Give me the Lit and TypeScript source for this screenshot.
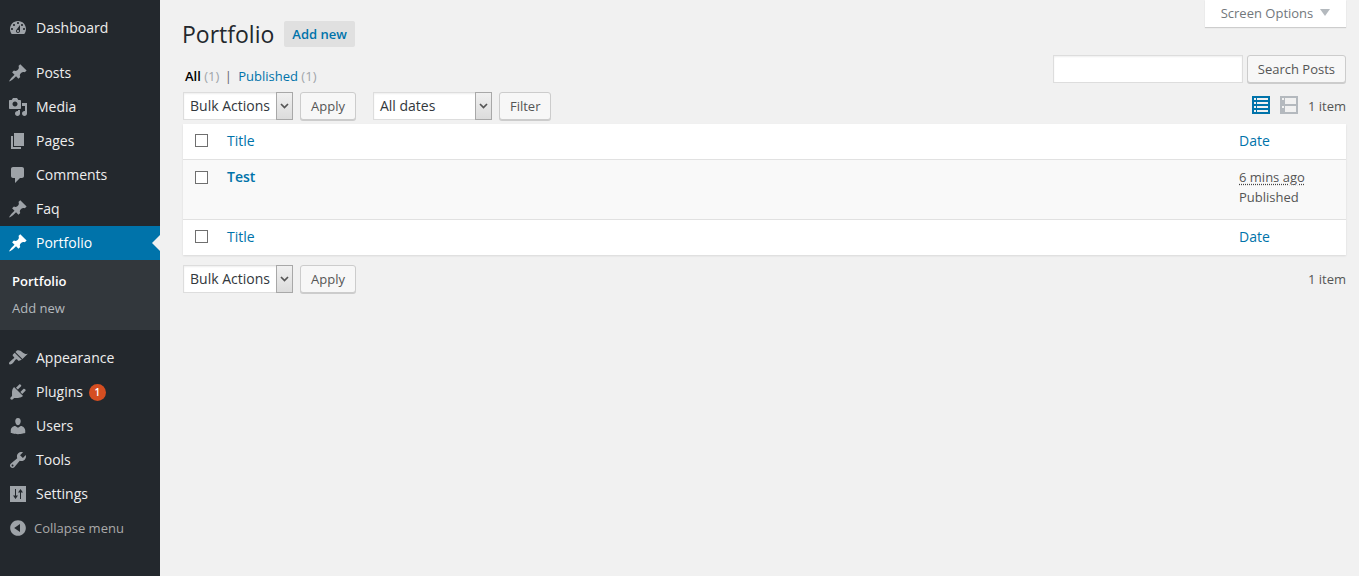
import { LitElement, html, css, svg } from "lit";
import { customElement } from "lit/decorators.js";

const pin = "M10.44 3.02l1.82-1.82 6.36 6.35-1.83 1.82c-1.05-.68-2.48-.57-3.41.36l-.75.75c-.92.93-1.04 2.35-.35 3.41l-1.83 1.82-2.41-2.41-2.8 2.79c-.42.42-3.38 2.71-3.8 2.29s1.86-3.39 2.28-3.81l2.79-2.79L4.1 9.36l1.83-1.82c1.05.69 2.48.57 3.4-.36l.75-.75c.93-.92 1.05-2.35.36-3.41z";
const icons: Record<string, string> = {
  dashboard: "M3.76 16h12.48c1.1-1.37 1.76-3.11 1.76-5 0-4.42-3.58-8-8-8s-8 3.58-8 8c0 1.89.66 3.63 1.76 5zM10 4c.55 0 1 .45 1 1s-.45 1-1 1-1-.45-1-1 .45-1 1-1zM6 6c.55 0 1 .45 1 1s-.45 1-1 1-1-.45-1-1 .45-1 1-1zm8 0c.55 0 1 .45 1 1s-.45 1-1 1-1-.45-1-1 .45-1 1-1zm-5.37 5.55L12 7v6c0 1.1-.9 2-2 2s-2-.9-2-2c0-.57.24-1.08.63-1.45zM4 10c.55 0 1 .45 1 1s-.45 1-1 1-1-.45-1-1 .45-1 1-1zm12 0c.55 0 1 .45 1 1s-.45 1-1 1-1-.45-1-1 .45-1 1-1zm-5 3c0-.55-.45-1-1-1s-1 .45-1 1 .45 1 1 1 1-.45 1-1z",
  pin,
  media: "M13 11V4c0-.55-.45-1-1-1h-1.67L9 1H5L3.67 3H2c-.55 0-1 .45-1 1v7c0 .55.45 1 1 1h10c.55 0 1-.45 1-1zM7 4.500c1.380 0 2.500 1.120 2.500 2.500S8.380 9.500 7 9.500 4.500 8.380 4.500 7 5.620 4.500 7 4.500zM14 6h5v10.500c0 1.380-1.120 2.500-2.500 2.500S14 17.880 14 16.500s1.120-2.500 2.500-2.500c.17 0 .34.02.5.05V9h-3V6zm-4 8.050V13h2v3.500c0 1.380-1.120 2.500-2.500 2.500S7 17.880 7 16.500 8.120 14 9.500 14c.17 0 .34.02.5.05z",
  page: "M6 15V2h10v13H6zm-1 1h8v2H3V5h2v11z",
  comments: "M5 2h9c1.100 0 2 .9 2 2v7c0 1.100-.9 2-2 2h-2l-5 5v-5H5c-1.100 0-2-.9-2-2V4c0-1.100.9-2 2-2z",
  appearance: "M14.480 11.060L7.410 3.990l1.500-1.500c.5-.56 2.300-.47 3.510.32 1.210.8 1.430 1.280 2.910 2.100 1.180.64 2.450 1.260 4.450.85zm-.71.71L6.700 4.700 4.930 6.470c-.39.39-.39 1.020 0 1.410l1.060 1.060c.39.39.39 1.030 0 1.420-.6.6-1.430 1.110-2.210 1.690-.35.26-.7.53-1.010.84C1.430 13.710.4 15.150 1.400 16.140c.99 1 2.430-.03 3.770-1.360.31-.31.58-.66.84-1.010.58-.78 1.090-1.610 1.690-2.210.39-.39 1.020-.39 1.410 0l1.060 1.060c.39.39 1.020.39 1.410 0z",
  plugins: "M13.110 4.360L9.870 7.600 8 5.730l3.240-3.240c.35-.34 1.050-.2 1.560.32.52.51.66 1.210.31 1.550zm-8 1.770l.91-1.120 9.010 9.010-1.190.84c-.71.71-2.630 1.160-3.820 1.160H6.140L4.900 17.260c-.59.59-1.540.59-2.120 0-.59-.58-.59-1.530 0-2.120l1.240-1.240v-3.880c0-1.130.4-3.190 1.090-3.890zm7.260 3.970l3.240-3.240c.34-.35 1.040-.21 1.550.31.52.51.66 1.210.31 1.550l-3.240 3.250z",
  users: "M10 9.250c-2.270 0-2.730-3.440-2.730-3.440C7 4.020 7.820 2 9.970 2c2.160 0 2.980 2.020 2.710 3.810 0 0-.41 3.440-2.680 3.440zm0 2.570L12.720 10c2.390 0 4.520 2.330 4.520 4.530v2.490s-3.650 1.130-7.240 1.130c-3.650 0-7.240-1.130-7.240-1.130v-2.490c0-2.250 1.940-4.480 4.470-4.480z",
  tools: "M16.680 9.770c-1.340 1.340-3.300 1.670-4.950.99l-5.410 6.520c-.99.99-2.590.99-3.580 0s-.99-2.590 0-3.570l6.520-5.420c-.68-1.650-.35-3.610.99-4.950 1.280-1.280 3.120-1.620 4.720-1.060l-2.890 2.890 2.820 2.820 2.860-2.870c.53 1.580.18 3.390-1.080 4.650zM3.810 16.210c.4.39 1.040.39 1.430 0 .4-.4.4-1.040 0-1.430-.39-.4-1.030-.4-1.430 0-.39.39-.39 1.030 0 1.430z",
  settings: "M2 2h16v16H2zM7 5v6.500H5L7.500 15 10 11.500H8V5zM12.500 5L10 8.500h2V15h1V8.500h2z",
  collapse: "M10 2.160c4.330 0 7.840 3.510 7.840 7.840s-3.510 7.840-7.840 7.840S2.160 14.330 2.160 10 5.710 2.160 10 2.160zm2 11.720V6.120L6.180 9.970z",
};

const icon = (name: string, cls = "ic") => html`<svg class=${cls} viewBox="0 0 20 20" aria-hidden="true">${svg`<path fill-rule="evenodd" d=${icons[name]}></path>`}</svg>`;

@customElement("app-root")
export class AppRoot extends LitElement {
  static styles = css`
    :host { display: block; font-family: "Open Sans", sans-serif; font-size: 13px; color: #444; background: #f1f1f1; min-height: 576px; }
    * { box-sizing: border-box; }
    a { color: #0073aa; text-decoration: none; }
    .layout { display: flex; min-height: 576px; }

    .side { width: 160px; flex: none; background: #23282d; padding-top: 11px; }
    .item { height: 34px; display: flex; align-items: center; font-size: 14px; color: #eee; position: relative; }
    .item span { margin-bottom: 2px; }
    .ic { width: 20px; height: 20px; fill: #9ea3a8; margin-left: 8px; margin-right: 8px; flex: none; }
    .gap { height: 11px; }
    .item.cur { background: #0073aa; color: #fff; }
    .item.cur .ic { fill: #fff; }
    .item.cur::after { content: ""; position: absolute; right: 0; top: 50%; margin-top: -8px; border: 8px solid transparent; border-right-color: #f1f1f1; }
    .sub { height: 70px; background: #32373c; padding: 8px 12px 0; margin-bottom: 11px; }
    .sub div { height: 27px; line-height: 27px; font-size: 13px; color: #b4b9be; }
    .sub .on { color: #fff; font-weight: 600; }
    .item .badge { display: inline-block; width: 17px; height: 17px; border-radius: 50%; background: #d54e21; color: #fff; font-size: 10px; font-weight: 600; line-height: 17px; text-align: center; margin: 0 0 0 6px; }
    .item.collapse { color: #aaa; font-size: 13px; }
    .item.collapse span { margin-bottom: 0; }
    .collapse .ic { margin-right: 6px; }

    .main { flex: 1; min-width: 0; padding: 0 13px 0 23px; }
    .screen-row { display: flex; justify-content: flex-end; height: 0; }
    .screen { width: 141px; height: 27px; padding-bottom: 2px; background: #fff; box-shadow: 0 1px 1px rgba(0,0,0,.15); display: flex; align-items: center; justify-content: center; gap: 7px; color: #72777c; font-size: 13px; position: relative; z-index: 1; }
    .tri { width: 0; height: 0; border: 5px solid transparent; border-top: 7px solid #b4b9be; border-bottom: 0; }
    .head { display: flex; align-items: center; padding-top: 17px; height: 51px; }
    h1 { margin: 0 0 0 -1px; font-size: 23px; font-weight: 400; color: #23282d; line-height: 34px; }
    .add { margin-left: 10px; height: 26px; line-height: 26px; padding: 0 8px; background: #e0e0e0; border-radius: 2px; font-weight: 600; font-size: 13px; color: #0073aa; }
    .filter-row { display: flex; justify-content: space-between; height: 41px; }
    .views { padding: 16px 0 0 2px; line-height: 18px; color: #a0a5aa; }
    .views b { font-weight: 600; color: #000; }
    .views .sep { color: #666; margin: 0 3px 0 2px; }
    .search { display: flex; gap: 4px; padding-top: 4px; height: 32px; }
    .search input { width: 190px; height: 28px; border: 1px solid #ddd; background: #fff; box-shadow: inset 0 1px 2px rgba(0,0,0,.07); padding: 0; margin: 0; }
    .btn { height: 28px; padding: 0 10px; border: 1px solid #ccc; border-radius: 3px; background: #f7f7f7; box-shadow: 0 1px 0 #ccc; color: #555; font: 13px/26px "Open Sans", sans-serif; }
    .tools { display: flex; align-items: flex-start; height: 32px; }
    .tools.bottom { margin-top: 10px; }
    .select { height: 28px; display: flex; border: 1px solid #ddd; background: #fff; box-shadow: inset 0 1px 2px rgba(0,0,0,.07); font-size: 14px; color: #32373c; line-height: 26px; }
    .select .lab { padding-left: 6px; flex: 1; }
    .select .arr { width: 17px; margin: -1px -1px -1px 0; height: 28px; background: linear-gradient(#f0f0f0, #dcdcdc); border: 1px solid #a8a8a8; display: flex; align-items: center; justify-content: center; }
    .arr svg { width: 9px; height: 6px; fill: none; stroke: #555; stroke-width: 1.7; }
    .s1 { width: 110px; margin-right: 7px; }
    .s2 { width: 119px; margin-left: 17px; margin-right: 7px; }
    .push { margin-left: auto; display: flex; align-items: center; height: 28px; color: #555; }
    .view-ic { width: 20px; height: 20px; flex: none; display: block; margin-top: -2px; }
    .v1 { margin-right: 8px; }
    .v2 { margin-right: 9px; }

    .wrap { box-shadow: 0 1px 2px rgba(0,0,0,.1); }
    table { width: 100%; border-collapse: separate; border-spacing: 0; background: #fff; table-layout: fixed; }
    th, td { font-weight: 400; text-align: left; padding: 0; vertical-align: top; font-size: 14px; }
    th { height: 36px; vertical-align: middle; }
    thead th { border-bottom: 1px solid #e1e1e1; padding-bottom: 2px; }
    tfoot th { border-top: 1px solid #e1e1e1; padding-bottom: 2px; }
    .c-check { width: 44px; padding-left: 12px; }
    .c-date { width: 107px; }
    .box { display: block; width: 13px; height: 13px; border: 1px solid #6f6f6f; background: #fff; }
    tbody tr { background: #f9f9f9; }
    tbody td { height: 59px; padding-top: 7px; line-height: 20px; }
    tbody .c-check { padding-top: 11px; }
    .title { font-weight: 600; font-size: 14px; }
    .date { font-size: 13px; color: #555; }
    .date abbr { text-decoration: underline dotted #444; text-underline-offset: 2px; display: block; }
  `;

  private menu(name: string, ic: string, extra = "") {
    return html`<div class="item ${extra}">${icon(ic)}<span>${name}</span></div>`;
  }

  private select(label: string, cls: string) {
    return html`<div class="select ${cls}"><span class="lab">${label}</span><span class="arr"><svg viewBox="0 0 9 6"><path d="M1 1l3.500 3.500L8 1"></path></svg></span></div>`;
  }

  render() {
    return html`
      <div class="layout">
        <nav class="side">
          ${this.menu("Dashboard", "dashboard")}
          <div class="gap"></div>
          ${this.menu("Posts", "pin")}
          ${this.menu("Media", "media")}
          ${this.menu("Pages", "page")}
          ${this.menu("Comments", "comments")}
          ${this.menu("Faq", "pin")}
          ${this.menu("Portfolio", "pin", "cur")}
          <div class="sub"><div class="on">Portfolio</div><div>Add new</div></div>
          ${this.menu("Appearance", "appearance")}
          <div class="item">${icon("plugins")}<span>Plugins</span><span class="badge">1</span></div>
          ${this.menu("Users", "users")}
          ${this.menu("Tools", "tools")}
          ${this.menu("Settings", "settings")}
          <div class="item collapse">${icon("collapse")}<span>Collapse menu</span></div>
        </nav>
        <main class="main">
          <div class="screen-row"><div class="screen">Screen Options <span class="tri"></span></div></div>
          <div class="head"><h1>Portfolio</h1><a class="add">Add new</a></div>
          <div class="filter-row">
            <div class="views"><b>All</b> (1) <span class="sep">|</span> <a>Published</a> (1)</div>
            <div class="search"><input type="text" /><button class="btn">Search Posts</button></div>
          </div>
          <div class="tools">
            ${this.select("Bulk Actions", "s1")}<button class="btn">Apply</button>
            ${this.select("All dates", "s2")}<button class="btn">Filter</button>
            <div class="push">
              <svg class="view-ic v1" viewBox="0 0 20 20" aria-hidden="true"><path fill="#0073aa" fill-rule="evenodd" d="M1 1h18v18H1zM3 3v2h2V3zM6 3v2h11V3zM3 7v2h2V7zM6 7v2h11V7zM3 11v2h2v-2zM6 11v2h11v-2zM3 15v2h2v-2zM6 15v2h11v-2z"></path></svg>
              <svg class="view-ic v2" viewBox="0 0 20 20" aria-hidden="true"><path fill="#b4b9be" fill-rule="evenodd" d="M1 1h18v18H1zM3 3v2h2V3zM6 3v6h11V3zM3 11v2h2v-2zM6 11v6h11v-6z"></path></svg>
              <span>1 item</span>
            </div>
          </div>
          <div class="wrap">
            <table>
              <thead><tr><th class="c-check"><span class="box"></span></th><th><a>Title</a></th><th class="c-date"><a>Date</a></th></tr></thead>
              <tbody><tr>
                <td class="c-check"><span class="box"></span></td>
                <td><a class="title">Test</a></td>
                <td class="c-date date"><abbr>6 mins ago</abbr>Published</td>
              </tr></tbody>
              <tfoot><tr><th class="c-check"><span class="box"></span></th><th><a>Title</a></th><th class="c-date"><a>Date</a></th></tr></tfoot>
            </table>
          </div>
          <div class="tools bottom">
            ${this.select("Bulk Actions", "s1")}<button class="btn">Apply</button>
            <div class="push"><span>1 item</span></div>
          </div>
        </main>
      </div>
    `;
  }
}
